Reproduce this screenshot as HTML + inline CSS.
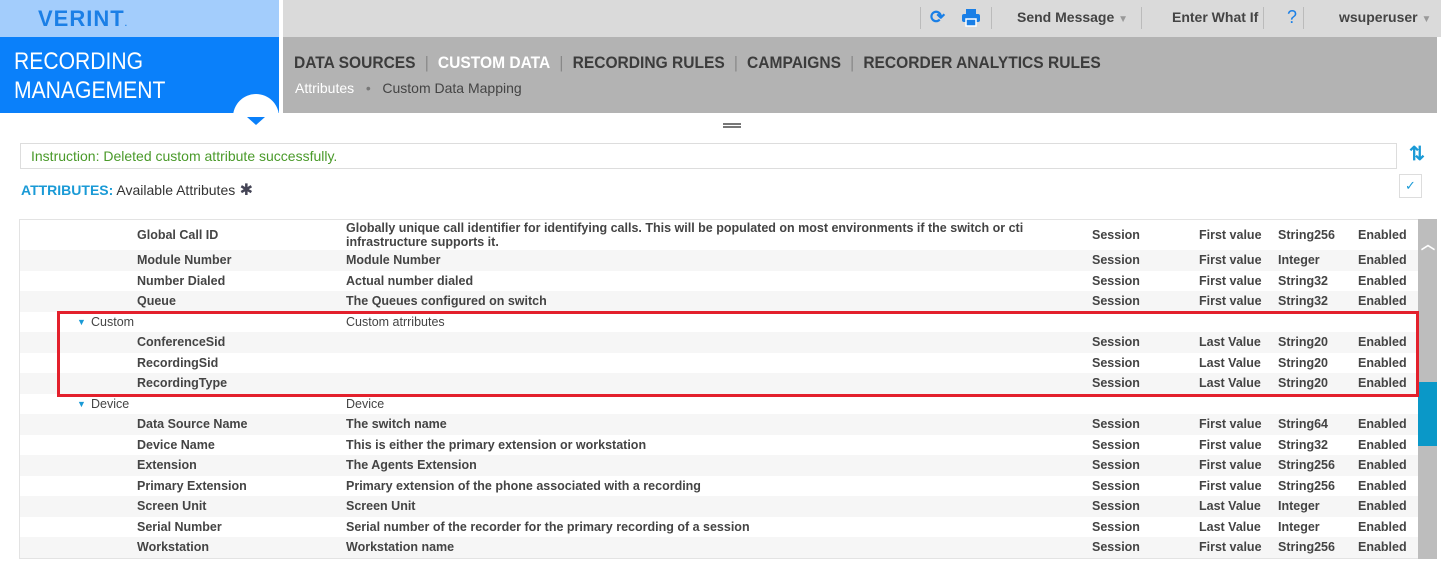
<!DOCTYPE html>
<html><head><meta charset="utf-8"><style>
*{margin:0;padding:0;box-sizing:border-box}
body{width:1441px;height:563px;overflow:hidden;background:#fff;font-family:"Liberation Sans",Arial,sans-serif;position:relative}
.a{position:absolute}
.top{left:0;top:0;width:1441px;height:37px;background:#dadada}
.lt{left:0;top:0;width:279px;height:37px;background:#a3cdfc}
.logo{left:38px;top:6px;font-size:22px;font-weight:bold;color:#1b7fe6;letter-spacing:1px}
.blue{left:0;top:37px;width:279px;height:76px;background:#0a80fa}
.bt{left:14px;top:47px;color:#fff;font-size:24px;line-height:29px;transform:scaleX(0.88);transform-origin:left top}
.nav{left:283px;top:37px;width:1154px;height:76px;background:#b3b3b3}
.tabs{left:294px;top:53px;font-size:17px;font-weight:bold;color:#3c3c3c;white-space:nowrap;transform:scaleX(0.915);transform-origin:left top}
.tabs span.s{color:#888;font-weight:normal;margin:0 10px}
.bc{left:295px;top:80px;font-size:14px;color:#444}
.tb{top:9px;font-size:14px;font-weight:bold;color:#444}
.sep{top:7px;width:1px;height:22px;background:#bbb}
.circ{left:233px;top:94px;width:46px;height:46px;border-radius:50%;background:#fff}
.tri{left:247px;top:117px;width:0;height:0;border-left:9px solid transparent;border-right:9px solid transparent;border-top:8px solid #0a80fa}
.instr{left:20px;top:143px;width:1377px;height:26px;border:1px solid #ddd;font-size:14px;color:#4a9a2a;padding:4px 10px}
.row{position:absolute;left:20px;width:1398px;height:20.5px;font-size:12.5px;font-weight:bold;color:#444}
.row.sh{background:#f6f6f6}
.row div{position:absolute;top:3px;white-space:nowrap}
</style></head><body>
<div class="a top"></div><div class="a lt"></div>
<div class="a logo">VERINT<span style="font-size:8px">.</span></div>
<div class="a blue"></div>
<div class="a bt">RECORDING<br>MANAGEMENT</div>
<div class="a" style="left:279px;top:0;width:4px;height:113px;background:#fff"></div>
<div class="a nav"></div>
<div class="a tabs">DATA SOURCES<span class="s">|</span><span style="color:#fff">CUSTOM DATA</span><span class="s">|</span>RECORDING RULES<span class="s">|</span>CAMPAIGNS<span class="s">|</span>RECORDER ANALYTICS RULES</div>
<div class="a bc"><span style="color:#fff">Attributes</span> &nbsp; <span style="color:#777">•</span> &nbsp; Custom Data Mapping</div>
<div class="a sep" style="left:920px"></div>
<div class="a" style="left:930px;top:7px;font-size:18px;color:#1a7fe6;font-weight:bold">⟳</div>
<svg class="a" style="left:961px;top:8px" width="20" height="19" viewBox="0 0 20 19"><rect x="5" y="1" width="10" height="5" fill="#1a7fe6"/><rect x="1" y="6" width="18" height="8" rx="2" fill="#1a7fe6"/><rect x="5" y="11" width="10" height="7" fill="#1a7fe6" stroke="#fff" stroke-width="1.5"/></svg>
<div class="a sep" style="left:991px"></div>
<div class="a tb" style="left:1017px">Send Message <span style="color:#999;font-size:10px">▼</span></div>
<div class="a sep" style="left:1141px"></div>
<div class="a tb" style="left:1172px">Enter What If</div>
<div class="a sep" style="left:1263px"></div>
<div class="a" style="left:1287px;top:7px;font-size:18px;color:#1a7fe6">?</div>
<div class="a sep" style="left:1303px"></div>
<div class="a tb" style="left:1339px">wsuperuser <span style="color:#999;font-size:10px">▼</span></div>
<div class="a circ"></div><div class="a tri"></div>
<div class="a" style="left:723px;top:123px;width:18px;height:1.5px;background:#777"></div>
<div class="a" style="left:723px;top:126px;width:18px;height:1.5px;background:#777"></div>
<div class="a instr">Instruction: Deleted custom attribute successfully.</div>
<div class="a" style="left:1409px;top:143px;font-size:19px;color:#1a9ad6;font-weight:bold">⇅</div>
<div class="a" style="left:21px;top:180px;font-size:14px"><b style="color:#1a9ad6">ATTRIBUTES:</b><span style="color:#333"> Available Attributes</span><span style="color:#445;font-size:16px"> ✱</span></div>
<div class="a" style="left:1399px;top:174px;width:23px;height:24px;border:1px solid #ddd;color:#1a9ad6;font-size:13px;text-align:center;line-height:22px">✓</div>
<div class="a" style="left:19px;top:219px;width:1418px;height:340px;border:1px solid #e3e3e3"></div>
<div class="a" style="left:1418px;top:219px;width:19px;height:340px;background:#bdbdbd"></div>
<div class="a" style="left:1418px;top:382px;width:19px;height:64px;background:#0a98c8"></div>
<div class="a" style="left:1421px;top:234px;color:#fff;font-size:14px;font-weight:bold">︿</div>
<div class="row" style="top:220px;height:30px"><div style="left:117px;top:8px">Global Call ID</div><div style="left:326px;top:1px;line-height:14px">Globally unique call identifier for identifying calls. This will be populated on most environments if the switch or cti<br>infrastructure supports it.</div><div style="left:1072px;top:8px">Session</div><div style="left:1179px;top:8px">First value</div><div style="left:1258px;top:8px">String256</div><div style="left:1338px;top:8px">Enabled</div></div>
<div id="rows"></div>
<div class="a" style="left:57px;top:311px;width:1362px;height:86px;border:3px solid #e3202c"></div>
<script>
var d=[
["Module Number","Module Number","First value","Integer",1],
["Number Dialed","Actual number dialed","First value","String32",0],
["Queue","The Queues configured on switch","First value","String32",1],
["#Custom","Custom atrributes","","",0],
["ConferenceSid","","Last Value","String20",1],
["RecordingSid","","Last Value","String20",0],
["RecordingType","","Last Value","String20",1],
["#Device","Device","","",0],
["Data Source Name","The switch name","First value","String64",1],
["Device Name","This is either the primary extension or workstation","First value","String32",0],
["Extension","The Agents Extension","First value","String256",1],
["Primary Extension","Primary extension of the phone associated with a recording","First value","String256",0],
["Screen Unit","Screen Unit","Last Value","Integer",1],
["Serial Number","Serial number of the recorder for the primary recording of a session","Last Value","Integer",0],
["Workstation","Workstation name","First value","String256",1]];
var h="";
d.forEach(function(r,i){var t=250+i*20.5;
if(r[0][0]=="#"){h+='<div class="row" style="top:'+t+'px;font-weight:normal"><div style="left:57px;color:#1a9ad6;font-size:9px;top:5px">▼</div><div style="left:71px">'+r[0].slice(1)+'</div><div style="left:326px">'+r[1]+'</div></div>';}
else h+='<div class="row'+(r[4]?' sh':'')+'" style="top:'+t+'px"><div style="left:117px">'+r[0]+'</div><div style="left:326px">'+r[1]+'</div><div style="left:1072px">Session</div><div style="left:1179px">'+r[2]+'</div><div style="left:1258px">'+r[3]+'</div><div style="left:1338px">Enabled</div></div>';});
document.getElementById("rows").innerHTML=h;
</script>
</body></html>
